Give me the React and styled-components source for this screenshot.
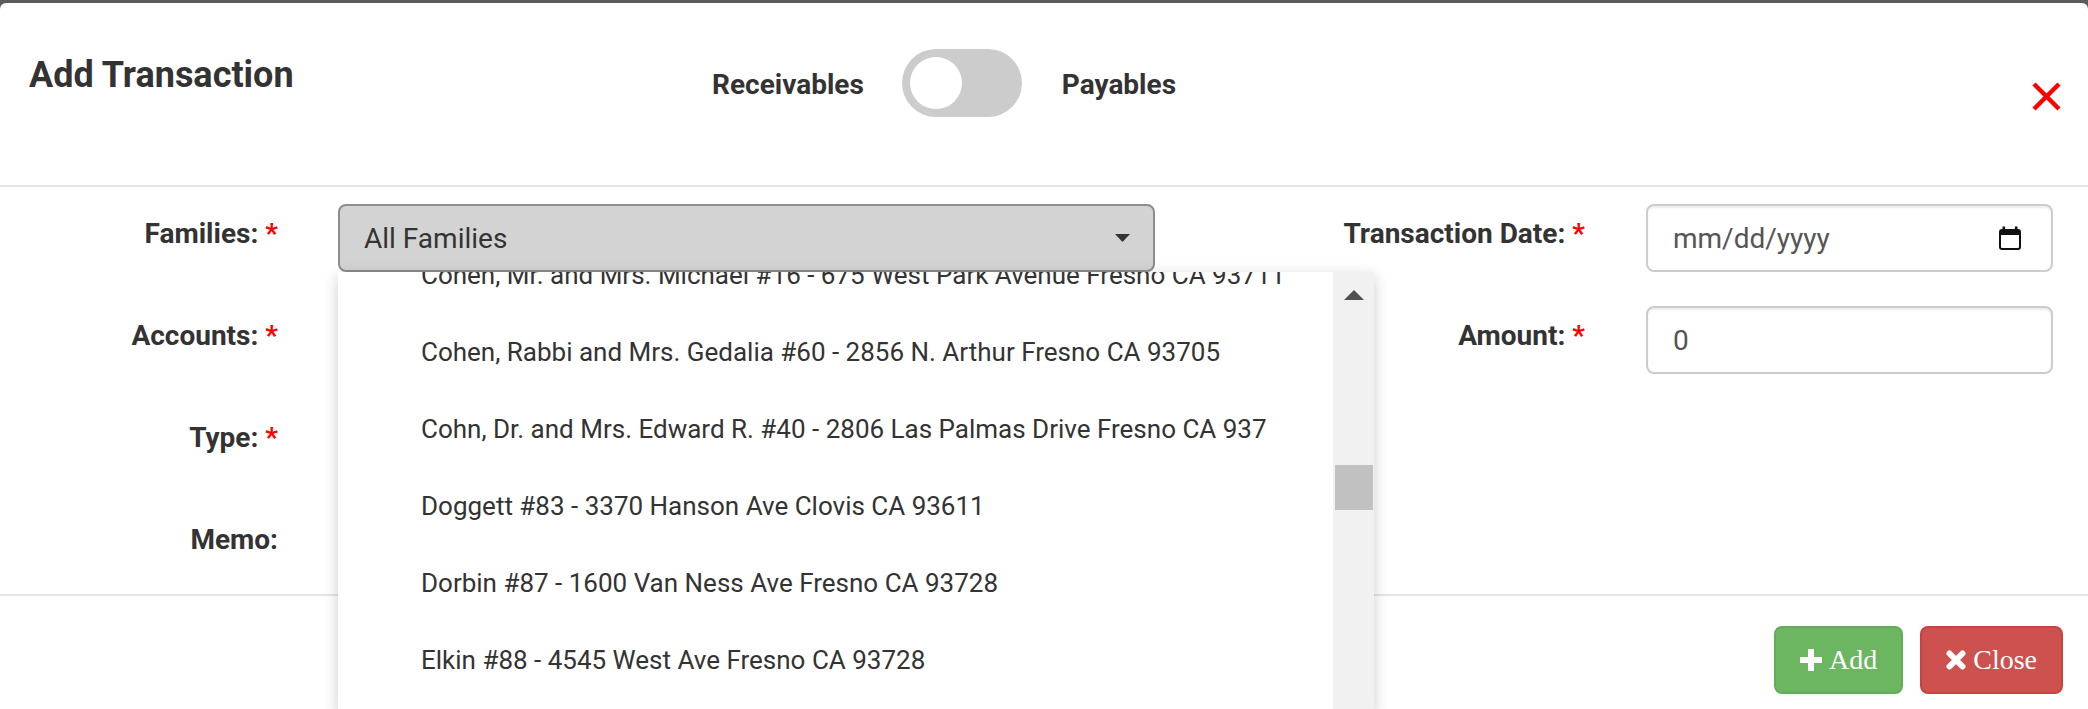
import React, { useLayoutEffect, useRef } from "react";
import styled, { createGlobalStyle } from "styled-components";

const GlobalStyle = createGlobalStyle`
  html, body { margin: 0; padding: 0; background: #5c5c5c; }
  body { font-family: Roboto, "Liberation Sans", Arial, sans-serif; color: #333; }
  * { box-sizing: border-box; }
`;

const families = [
  "Cohen, Mr. and Mrs. Michael #16 - 675 West Park Avenue Fresno CA 93711",
  "Cohen, Rabbi and Mrs. Gedalia #60 - 2856 N. Arthur Fresno CA 93705",
  "Cohn, Dr. and Mrs. Edward R. #40 - 2806 Las Palmas Drive Fresno CA 937",
  "Doggett #83 - 3370 Hanson Ave Clovis CA 93611",
  "Dorbin #87 - 1600 Van Ness Ave Fresno CA 93728",
  "Elkin #88 - 4545 West Ave Fresno CA 93728",
  "Feldman #91 - 1420 E. Shaw Ave Fresno CA 93710",
];

const Page = styled.div`
  height: 709px;
  overflow: hidden;
  padding-top: 3px;
`;

const Modal = styled.div`
  background: #fff;
  border-radius: 6px 6px 0 0;
  height: 706px;
  overflow: hidden;
`;

const Header = styled.div`
  display: grid;
  grid-template-columns: 683px auto 1fr;
  align-items: start;
  height: 184px;
  padding: 0 27px 0 29px;
  border-bottom: 2px solid #e5e5e5;
`;

const Title = styled.h4`
  margin: 52px 0 0;
  font-size: 36px;
  line-height: 40px;
  font-weight: 700;
  color: #333;
`;

const ToggleGroup = styled.div`
  display: flex;
  align-items: flex-start;
  margin-top: 46px;
`;

const ToggleLabel = styled.span`
  font-size: 28px;
  font-weight: 700;
  line-height: 68px;
  padding-top: 2px;
  color: #333;
`;

const Switch = styled.div`
  display: flex;
  width: 120px;
  height: 68px;
  padding: 8px;
  margin: 0 40px 0 38px;
  border-radius: 34px;
  background: #ccc;
`;

const Knob = styled.span`
  width: 52px;
  height: 52px;
  border-radius: 50%;
  background: #fff;
`;

const CloseX = styled.svg`
  justify-self: end;
  margin-top: 79px;
`;

const Body = styled.div`
  display: grid;
  grid-template-columns: 338px 817px 491px 407px;
  grid-auto-rows: 68px;
  row-gap: 34px;
  padding: 17px 0 16px;
`;

const Label = styled.label`
  text-align: right;
  padding: 10px ${(p) => (p.$right ? "61px" : "60px")} 0 0;
  font-size: 28px;
  line-height: 40px;
  font-weight: 700;
  color: #333;
`;

const Required = styled.span`
  color: #f00;
`;

const Cell = styled.div`
  position: relative;
`;

const SelectBox = styled.div`
  display: flex;
  align-items: center;
  justify-content: space-between;
  height: 68px;
  padding: 0 23px 0 24px;
  border: 2px solid ${(p) => (p.$open ? "#8d8d8d" : "#ccc")};
  border-radius: 8px;
  background: ${(p) => (p.$open ? "#d3d3d3" : "#fff")};
  font-size: 28px;
  color: #333;
`;

const Dropdown = styled.div`
  position: absolute;
  top: 100%;
  left: 0;
  z-index: 5;
  display: flex;
  width: 1036px;
  height: 440px;
  background: #fff;
  box-shadow: 0 4px 14px rgba(0, 0, 0, 0.2);
`;

const ListViewport = styled.div`
  flex: 1;
  overflow: hidden;
`;

const List = styled.ul`
  margin: 0;
  padding: 0;
  list-style: none;
`;

const Item = styled.li`
  padding-left: 83px;
  font-size: 26px;
  line-height: 77px;
  white-space: nowrap;
  color: #333;
`;

const Scrollbar = styled.div`
  display: flex;
  flex-direction: column;
  align-items: center;
  width: 41px;
  background: #f1f1f1;
`;

const ScrollArrow = styled.div`
  display: flex;
  align-items: center;
  justify-content: center;
  height: 46px;
  width: 100%;
`;

const Thumb = styled.div`
  width: 38px;
  height: 45px;
  margin-top: 147px;
  background: #c1c1c1;
`;

const Field = styled.div`
  display: flex;
  align-items: center;
  justify-content: space-between;
  height: 68px;
  padding: 0 30px 0 25px;
  border: 2px solid #ccc;
  border-radius: 8px;
  box-shadow: inset 0 2px 2px rgba(0, 0, 0, 0.075);
  font-size: 28px;
  color: #555;
`;

const TextInput = styled.input`
  display: block;
  width: 100%;
  height: 68px;
  padding: 0 25px;
  border: 2px solid #ccc;
  border-radius: 8px;
  box-shadow: inset 0 2px 2px rgba(0, 0, 0, 0.075);
  font-family: inherit;
  font-size: 28px;
  color: #555;
  outline: none;
`;

const Footer = styled.div`
  display: flex;
  justify-content: flex-end;
  gap: 17px;
  padding: 30px 25px 0 0;
  border-top: 2px solid #e5e5e5;
`;

const Button = styled.button`
  display: inline-flex;
  align-items: center;
  gap: 7px;
  height: 68px;
  padding: 0 24px;
  border: 2px solid ${(p) => (p.$variant === "danger" ? "#c8433f" : "#62ad58")};
  border-radius: 8px;
  background: ${(p) => (p.$variant === "danger" ? "#cd524f" : "#6cb662")};
  color: #fff;
  font-family: "Liberation Serif", "Times New Roman", serif;
  font-size: 28px;
  line-height: 40px;
`;

const Caret = () => (
  <svg width="15" height="8" viewBox="0 0 15 8">
    <polygon points="0,0 15,0 7.5,8" fill="#333" />
  </svg>
);

const CalendarIcon = () => (
  <svg width="22" height="24" viewBox="0 0 22 24">
    <rect x="1" y="4" width="20" height="19" rx="2" fill="none" stroke="#111" strokeWidth="2" />
    <rect x="1" y="4" width="20" height="5" fill="#111" />
    <rect x="3.5" y="0.5" width="2.6" height="5" fill="#111" />
    <rect x="15.9" y="0.5" width="2.6" height="5" fill="#111" />
  </svg>
);

const PlusIcon = () => (
  <svg width="22" height="22" viewBox="0 0 22 22">
    <path d="M8 0h6v8h8v6h-8v8H8v-8H0V8h8z" fill="#fff" />
  </svg>
);

const RemoveIcon = () => (
  <svg width="20" height="20" viewBox="0 0 20 20">
    <path d="M3.5 3.5L16.5 16.5M16.5 3.5L3.5 16.5" stroke="#fff" strokeWidth="6" strokeLinecap="round" />
  </svg>
);

function FamilyDropdown() {
  const viewport = useRef(null);
  useLayoutEffect(() => {
    if (viewport.current) viewport.current.scrollTop = 35;
  }, []);
  return (
    <Dropdown>
      <ListViewport ref={viewport}>
        <List>
          {families.map((f) => (
            <Item key={f}>{f}</Item>
          ))}
        </List>
      </ListViewport>
      <Scrollbar>
        <ScrollArrow>
          <svg width="20" height="10" viewBox="0 0 20 10">
            <polygon points="0,10 20,10 10,0" fill="#505050" />
          </svg>
        </ScrollArrow>
        <Thumb />
      </Scrollbar>
    </Dropdown>
  );
}

export default function App() {
  return (
    <Page>
      <GlobalStyle />
      <Modal>
        <Header>
          <Title>Add Transaction</Title>
          <ToggleGroup>
            <ToggleLabel>Receivables</ToggleLabel>
            <Switch>
              <Knob />
            </Switch>
            <ToggleLabel>Payables</ToggleLabel>
          </ToggleGroup>
          <CloseX width="29" height="29" viewBox="0 0 29 29">
            <path d="M2 2L27 27M27 2L2 27" stroke="#f00" strokeWidth="4.5" />
          </CloseX>
        </Header>

        <Body>
          <Label>
            Families: <Required>*</Required>
          </Label>
          <Cell>
            <SelectBox $open>
              <span>All Families</span>
              <Caret />
            </SelectBox>
            <FamilyDropdown />
          </Cell>
          <Label $right>
            Transaction Date: <Required>*</Required>
          </Label>
          <Field>
            <span>mm/dd/yyyy</span>
            <CalendarIcon />
          </Field>

          <Label>
            Accounts: <Required>*</Required>
          </Label>
          <SelectBox>
            <span />
            <Caret />
          </SelectBox>
          <Label $right>
            Amount: <Required>*</Required>
          </Label>
          <TextInput value="0" readOnly />

          <Label>
            Type: <Required>*</Required>
          </Label>
          <SelectBox>
            <span />
            <Caret />
          </SelectBox>
          <div />
          <div />

          <Label>Memo:</Label>
          <SelectBox />
          <div />
          <div />
        </Body>

        <Footer>
          <Button $variant="success">
            <PlusIcon />
            Add
          </Button>
          <Button $variant="danger">
            <RemoveIcon />
            Close
          </Button>
        </Footer>
      </Modal>
    </Page>
  );
}
